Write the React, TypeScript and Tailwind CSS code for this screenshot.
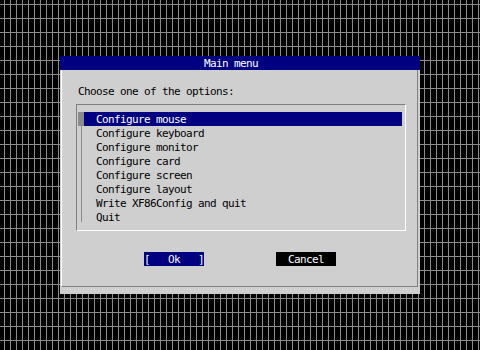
const items = [
  "Configure mouse",
  "Configure keyboard",
  "Configure monitor",
  "Configure card",
  "Configure screen",
  "Configure layout",
  "Write XF86Config and quit",
  "Quit",
];

export default function App() {
  return (
    <div className="h-[350px] w-[480px] bg-black bg-[linear-gradient(to_right,transparent_4px,#8c8c8c_4px,#8c8c8c_5px,transparent_5px),linear-gradient(to_bottom,transparent_4px,#8c8c8c_4px,#8c8c8c_5px,transparent_5px)] bg-[size:6px_14px] pl-[60px] pt-[56px] font-['DejaVu_Sans_Mono',monospace] text-[11px] leading-[14px] tracking-[-0.62px]">
      <div className="flex h-[238px] w-[360px] flex-col bg-[#cfcfcf]">
        <div className="h-[14px] bg-[#000080] pl-[144px] pt-px text-white">Main menu</div>
        <div className="flex flex-1 pb-[7px] pl-px pr-[2px]">
          <div className="flex flex-1 flex-col border-b border-l border-r border-b-[#808080] border-l-white border-r-[#808080] pl-[14px] pt-[15px] text-black">
            <div className="pl-[2px]">Choose one of the options:</div>
            <div className="mt-[5px] flex w-[330px] border-b border-l border-r border-t border-b-white border-l-[#808080] border-r-white border-t-[#808080] pb-[6px] pl-px pr-[3px] pt-[7px]">
              <div className="flex w-[6px] flex-col items-center">
                <div className="h-[14px] w-[6px] bg-[#8c8c8c]" />
                <div className="h-[96px] w-px bg-[#8c8c8c]" />
              </div>
              <div className="flex flex-1 flex-col">
                {items.map((item, i) => (
                  <div
                    key={item}
                    className={
                      i === 0
                        ? "h-[14px] bg-[#000080] pl-[12px] pt-px text-white"
                        : "h-[14px] pl-[12px] pt-px"
                    }
                  >
                    {item}
                  </div>
                ))}
              </div>
            </div>
            <div className="mt-[21px] flex pl-[68px]">
              <div className="h-[14px] w-[60px] whitespace-pre bg-[#000080] pt-px text-white">[   Ok   ]</div>
              <div className="ml-[72px] h-[14px] w-[60px] whitespace-pre bg-black pt-px text-white">  Cancel</div>
            </div>
          </div>
        </div>
      </div>
    </div>
  );
}
